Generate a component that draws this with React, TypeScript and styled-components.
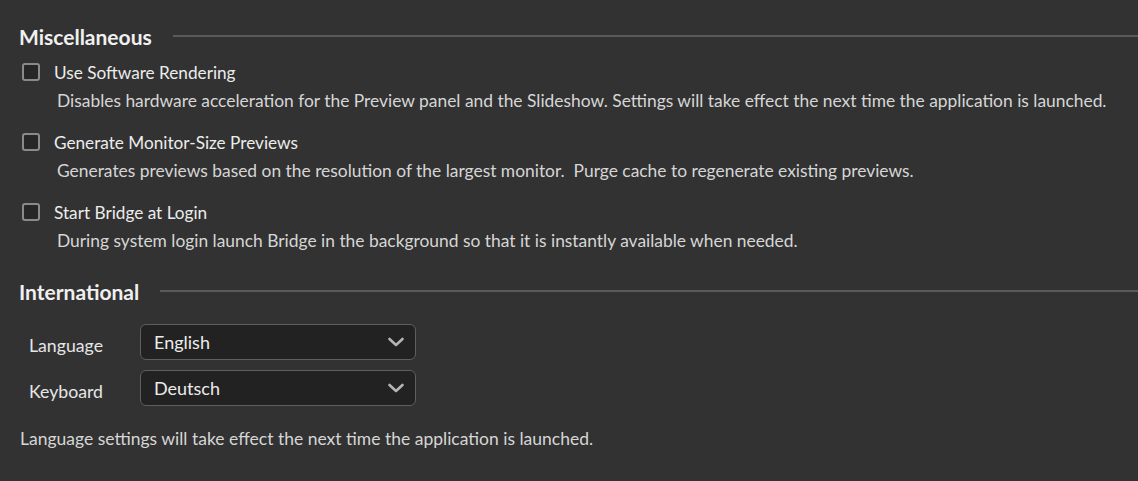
import React from "react";
import styled, { createGlobalStyle } from "styled-components";

const Global = createGlobalStyle`
  html, body { margin: 0; padding: 0; background: #323232; }
  body { font-family: Lato, "Open Sans", sans-serif; color: #e6e6e6; }
  * { box-sizing: border-box; }
`;

const Page = styled.div`
  width: 1138px;
  height: 481px;
  background: #323232;
  padding: 24px 0 0 19px;
  overflow: hidden;
`;

const SectionHeader = styled.div<{ $top?: number }>`
  display: flex;
  align-items: center;
  gap: 21px;
  height: 24px;
  margin-top: ${(p) => p.$top ?? 0}px;
`;

const SectionTitle = styled.h2`
  margin: 0;
  font-size: 21px;
  font-weight: 700;
  color: #f0f0f0;
  white-space: nowrap;
`;

const Rule = styled.div`
  flex: 1;
  height: 2px;
  background: #5a5a5a;
`;

const Option = styled.div<{ $first?: boolean }>`
  margin-top: ${(p) => (p.$first ? 14 : 21)}px;
  display: flex;
  flex-direction: column;
`;

const CheckRow = styled.label`
  display: flex;
  align-items: center;
  gap: 14px;
  height: 20px;
  padding-left: 3px;
`;

const Box = styled.span`
  width: 18px;
  height: 18px;
  border: 2px solid #8a8a8a;
  border-radius: 3px;
  background: #262626;
  flex: none;
`;

const Label = styled.span`
  font-size: 17.2px;
  color: #ececec;
`;

const Desc = styled.div`
  margin-top: 8px;
  padding-left: 38px;
  font-size: 17.4px;
  line-height: 21px;
  color: #d6d6d6;
  white-space: pre;
`;

const Form = styled.div`
  margin-top: 21px;
  display: grid;
  grid-template-columns: 121px 276px;
  row-gap: 10px;
  align-items: center;
`;

const FieldLabel = styled.span`
  font-size: 17.7px;
  color: #e6e6e6;
  padding-left: 10px;
  padding-top: 6px;
`;

const Select = styled.div`
  height: 36px;
  border: 1.5px solid #5e5e5e;
  border-radius: 6px;
  background: #222222;
  display: flex;
  align-items: center;
  justify-content: space-between;
  padding: 0 10px 0 13px;
  font-size: 18px;
  color: #ececec;
`;

const Note = styled.div`
  margin-top: 22px;
  padding-left: 1px;
  font-size: 17.5px;
  color: #d6d6d6;
`;

const Chevron = () => (
  <svg width="18" height="12" viewBox="0 0 18 12">
    <path d="M2.5 3 L9 9 L15.5 3" fill="none" stroke="#b4b4b4" strokeWidth="2.6" strokeLinecap="round" strokeLinejoin="round" />
  </svg>
);

const options = [
  {
    label: "Use Software Rendering",
    desc: "Disables hardware acceleration for the Preview panel and the Slideshow. Settings will take effect the next time the application is launched.",
  },
  {
    label: "Generate Monitor-Size Previews",
    desc: "Generates previews based on the resolution of the largest monitor.  Purge cache to regenerate existing previews.",
  },
  {
    label: "Start Bridge at Login",
    desc: "During system login launch Bridge in the background so that it is instantly available when needed.",
  },
];

export default function App() {
  return (
    <>
      <Global />
      <Page>
        <SectionHeader>
          <SectionTitle>Miscellaneous</SectionTitle>
          <Rule />
        </SectionHeader>
        {options.map((o, i) => (
          <Option key={o.label} $first={i === 0}>
            <CheckRow>
              <Box />
              <Label>{o.label}</Label>
            </CheckRow>
            <Desc>{o.desc}</Desc>
          </Option>
        ))}
        <SectionHeader $top={28}>
          <SectionTitle>International</SectionTitle>
          <Rule />
        </SectionHeader>
        <Form>
          <FieldLabel>Language</FieldLabel>
          <Select>
            <span>English</span>
            <Chevron />
          </Select>
          <FieldLabel>Keyboard</FieldLabel>
          <Select>
            <span>Deutsch</span>
            <Chevron />
          </Select>
        </Form>
        <Note>Language settings will take effect the next time the application is launched.</Note>
      </Page>
    </>
  );
}
